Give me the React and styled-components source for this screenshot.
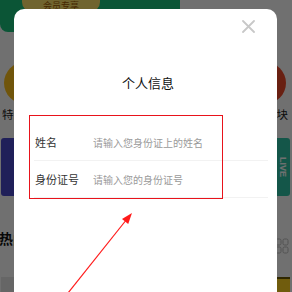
import React from "react";
import styled, { createGlobalStyle } from "styled-components";

const GlobalStyle = createGlobalStyle`
  html, body {
    margin: 0;
    padding: 0;
    background: #fff;
    overflow: hidden;
  }
  body {
    font-family: "Noto Sans CJK SC", "Noto Sans", sans-serif;
  }
`;

const shortcuts = [
  { name: "特惠专区", color: "#ffc21a" },
  { name: "限时秒杀", color: "#ff7a45" },
  { name: "领券中心", color: "#36cfc9" },
  { name: "新品上市", color: "#597ef7" },
  { name: "热门板块", color: "#f04a2a" },
];

const App = () => {
  return (
    <Page>
      <GlobalStyle />
      <Home>
        <TopRow>
          <Banner>
            <Pill>会员专享</Pill>
          </Banner>
        </TopRow>
        <Shortcuts>
          {shortcuts.map((s) => (
            <Shortcut key={s.name}>
              <Circle color={s.color} />
              <ShortcutLabel>{s.name}</ShortcutLabel>
            </Shortcut>
          ))}
        </Shortcuts>
        <Cards>
          <PromoCard color="#4a4acb" />
          <PromoCard color="#2fc4a6">
            <PromoText>LIVE</PromoText>
          </PromoCard>
        </Cards>
        <SectionHead>
          <SectionTitle>热门推荐</SectionTitle>
          <GridIcon viewBox="0 0 14 16">
            <rect x="1" y="1" width="5" height="6" rx="1.5" />
            <rect x="8" y="1" width="5" height="6" rx="1.5" />
            <rect x="1" y="9" width="5" height="6" rx="1.5" />
            <rect x="8" y="9" width="5" height="6" rx="1.5" />
          </GridIcon>
        </SectionHead>
        <Goods>
          <GoodsTile color="#e8e8e8" />
          <GoodsTile color="#ffd21f" outlined />
        </Goods>
      </Home>

      <Overlay />

      <Modal>
        <Close aria-label="关闭">
          <svg width="13" height="13" viewBox="0 0 13 13">
            <path
              d="M1 1 L12 12 M12 1 L1 12"
              stroke="#c8c8c8"
              strokeWidth="1.8"
              strokeLinecap="round"
            />
          </svg>
        </Close>
        <Title>个人信息</Title>
        <Form>
          <Row>
            <Label>姓名</Label>
            <Input placeholder="请输入您身份证上的姓名" />
          </Row>
          <Row>
            <Label>身份证号</Label>
            <Input placeholder="请输入您的身份证号" />
          </Row>
        </Form>
      </Modal>

      <Highlight />
      <Arrow width="292" height="292" viewBox="0 0 292 292">
        <line x1="68" y1="293" x2="127" y2="219" stroke="#ff1a1a" strokeWidth="1.2" />
        <polygon points="132,213 128.2,224.1 122,219.1" fill="#ff1a1a" />
      </Arrow>
    </Page>
  );
};

export default App;

const Page = styled.div`
  position: relative;
  width: 292px;
  height: 292px;
  overflow: hidden;
  background: #fff;
`;

const Home = styled.div`
  display: flex;
  flex-direction: column;
`;

const TopRow = styled.div`
  display: flex;
`;

const Banner = styled.div`
  width: 180px;
  height: 32px;
  background: #19c27c;
  border-radius: 0 0 8px 8px;
  display: flex;
  padding-left: 22px;
  box-sizing: border-box;
`;

const Pill = styled.div`
  width: 78px;
  height: 12px;
  background: #ffe46b;
  border-radius: 0 0 10px 10px;
  font-size: 9px;
  line-height: 12px;
  text-align: center;
  color: #a05a00;
`;

const Shortcuts = styled.div`
  display: grid;
  grid-template-columns: repeat(5, 60px);
  margin: 30px 0 0 -5px;
`;

const Shortcut = styled.div`
  display: flex;
  flex-direction: column;
  align-items: center;
`;

const Circle = styled.div`
  width: 42px;
  height: 42px;
  border-radius: 50%;
  background: ${(p) => p.color};
`;

const ShortcutLabel = styled.div`
  margin-top: 3px;
  font-size: 11.5px;
  line-height: 14px;
  color: #222;
  white-space: nowrap;
`;

const Cards = styled.div`
  display: grid;
  grid-template-columns: 1fr 1fr;
  gap: 8px;
  margin-top: 17px;
  padding: 0 2px 0 1px;
`;

const PromoCard = styled.div`
  height: 58px;
  background: ${(p) => p.color};
  border-radius: 3px;
  display: flex;
  align-items: center;
  justify-content: flex-end;
  padding-right: 2px;
`;

const PromoText = styled.span`
  writing-mode: vertical-rl;
  font-family: "Liberation Sans", sans-serif;
  font-size: 9px;
  font-weight: bold;
  color: #fff;
`;

const SectionHead = styled.div`
  display: flex;
  align-items: flex-start;
  justify-content: space-between;
  margin-top: 33px;
  padding-right: 3px;
`;

const SectionTitle = styled.div`
  font-size: 14px;
  font-weight: bold;
  line-height: 18px;
  color: #111;
  margin-left: -1px;
`;

const GridIcon = styled.svg`
  width: 14px;
  height: 16px;
  fill: none;
  stroke: #bbb;
  stroke-width: 1;
  margin-top: 9px;
`;

const Goods = styled.div`
  display: grid;
  grid-template-columns: 1fr 1fr;
  gap: 8px;
  margin-top: 23px;
  padding: 0 2px 0 1px;
`;

const GoodsTile = styled.div`
  height: 40px;
  background: ${(p) => p.color};
  border-left: ${(p) => (p.outlined ? "2px solid #6b5a00" : "none")};
  border-top: ${(p) => (p.outlined ? "2px solid #6b5a00" : "none")};
`;

const Overlay = styled.div`
  position: absolute;
  inset: 0;
  background: rgba(0, 0, 0, 0.56);
`;

const Modal = styled.div`
  position: absolute;
  left: 14px;
  top: 9px;
  width: 263px;
  height: 300px;
  background: #fff;
  border-radius: 10px;
  display: flex;
  flex-direction: column;
  padding-top: 64px;
  box-sizing: border-box;
`;

const Close = styled.div`
  position: absolute;
  top: 11px;
  right: 22px;
  width: 13px;
  height: 13px;
  display: flex;
`;

const Title = styled.div`
  font-size: 13px;
  line-height: 19px;
  color: #111;
  text-align: center;
  padding-left: 5px;
`;

const Form = styled.div`
  display: flex;
  flex-direction: column;
  margin: 32px 9px 0 20px;
`;

const Row = styled.div`
  display: flex;
  align-items: center;
  height: 37px;
  border-bottom: 1px solid #f2f2f2;
  box-sizing: border-box;
`;

const Label = styled.div`
  width: 58px;
  padding-left: 1px;
  font-size: 11px;
  color: #333;
  flex-shrink: 0;
`;

const Input = styled.input`
  flex: 1;
  min-width: 0;
  border: none;
  outline: none;
  padding: 0;
  background: transparent;
  font-family: "Noto Sans CJK SC", sans-serif;
  font-size: 10px;
  color: #333;
  &::placeholder {
    color: #9a9a9a;
  }
`;

const Highlight = styled.div`
  position: absolute;
  left: 29px;
  top: 115px;
  width: 194px;
  height: 84px;
  border: 1px solid #e8131b;
  box-sizing: border-box;
  pointer-events: none;
`;

const Arrow = styled.svg`
  position: absolute;
  left: 0;
  top: 0;
  pointer-events: none;
`;
